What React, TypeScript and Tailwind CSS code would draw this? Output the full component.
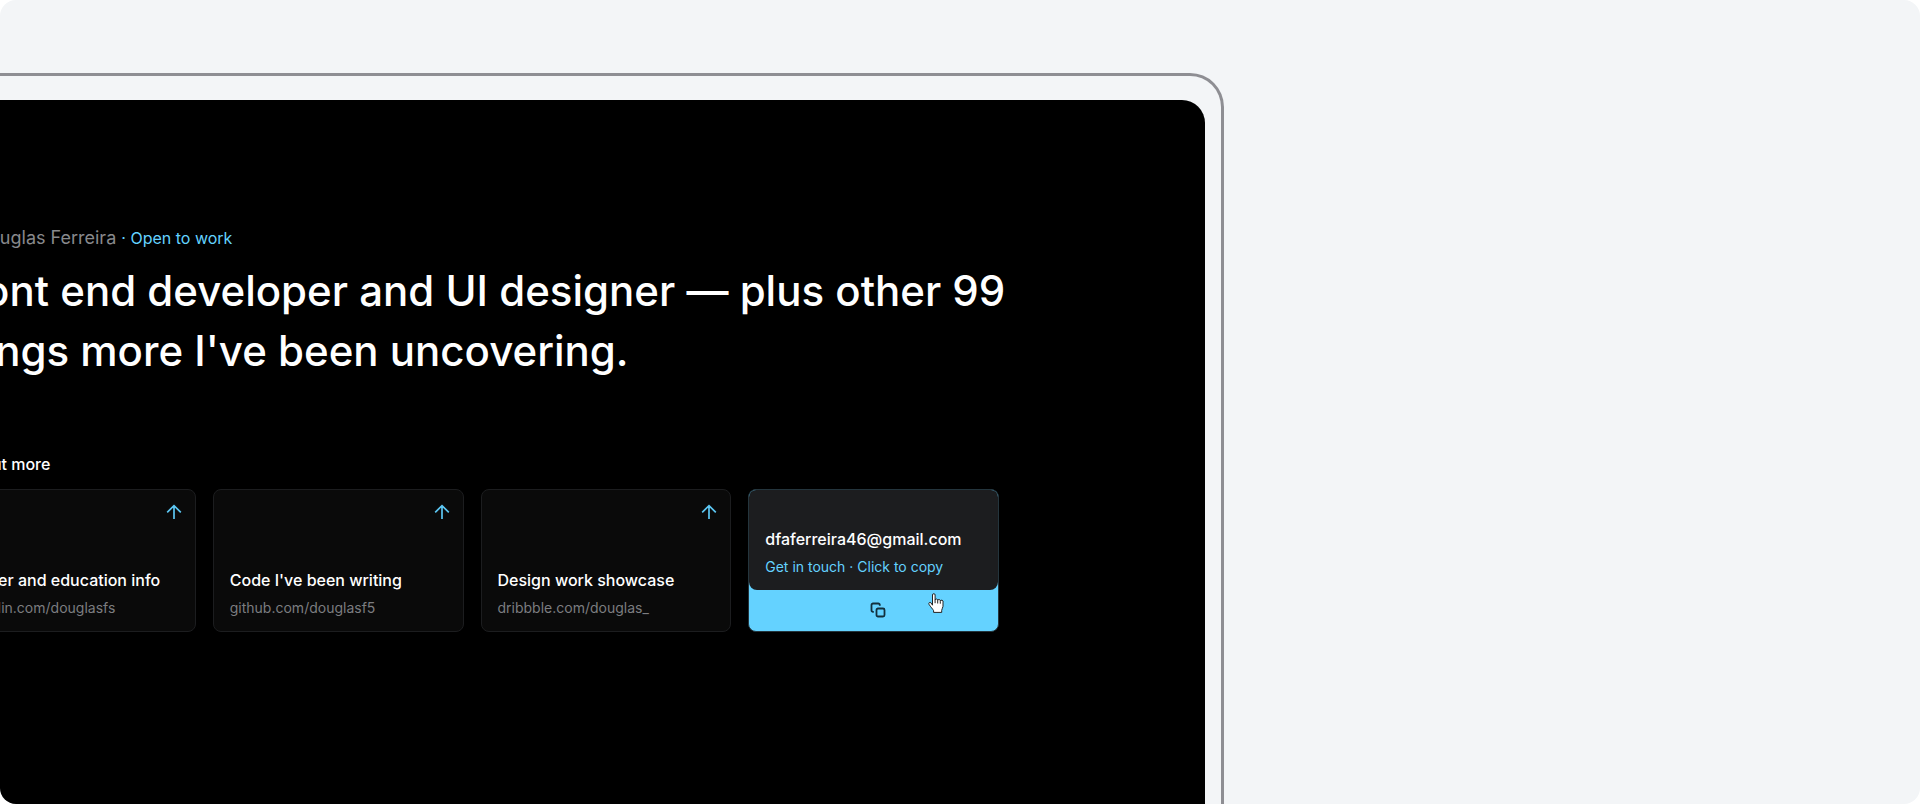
import React from 'react';

const links = [
  { title: 'Career and education info', url: 'linkedin.com/douglasfs' },
  { title: "Code I've been writing", url: 'github.com/douglasf5' },
  { title: 'Design work showcase', url: 'dribbble.com/douglas_' },
];

function ArrowUp() {
  return (
    <svg aria-hidden="true" viewBox="0 0 16 16" className="size-4 self-end text-[#5cc6f2]" fill="none" stroke="currentColor" strokeWidth="1.7">
      <path d="M8 15V2M1.2 8.3 8 1.7l6.8 6.6" />
    </svg>
  );
}

function CopyIcon() {
  return (
    <svg aria-hidden="true" viewBox="0 0 16 16" className="size-4 text-[#12303d]" fill="none" stroke="currentColor" strokeWidth="1.8">
      <rect x="6.5" y="6.5" width="8" height="8" rx="1.5" />
      <path d="M3.8 9.8H3a1.5 1.5 0 0 1-1.5-1.5V3A1.5 1.5 0 0 1 3 1.500h5.300A1.500 1.500 0 0 1 9.800 3v.800" />
    </svg>
  );
}

function HandCursor() {
  return (
    <svg aria-hidden="true" viewBox="0 0 16 20" className="absolute right-[54px] bottom-[18px] h-5 w-4" fill="#fff" stroke="#222" strokeWidth="1" strokeLinejoin="round">
      <path d="M4.5 12.2V2a1.3 1.3 0 0 1 2.6 0v5.2a1.3 1.3 0 0 1 2.6.3 1.3 1.3 0 0 1 2.6.6 1.3 1.3 0 0 1 2.7 1v4.2c0 1.4-1.3 2.6-1.3 4v2.1H5.600v-1.700C4.800 16 2.600 14 1 11.300c-.8-1.600 1-2.500 2-1.400z" />
      <path d="M7.100 7.200v3M9.700 7.500v3M12.300 8.200v2.500" fill="none" />
    </svg>
  );
}

export default function App() {
  return (
    <div className="bg-white font-[Inter,sans-serif]">
      <main className="flex h-screen flex-col overflow-hidden rounded-2xl bg-[#f3f5f7] pt-[73px]">
        <div className="flex w-[63.75%] grow flex-col rounded-tr-[34px] border-t-[3px] border-r-[3px] border-[#8e8e93] pt-6 pr-4">
          <div className="grow rounded-tr-[23px] bg-black pt-[124px]">
            <div className="-ml-[55px] w-[1054px]">
              <p className="text-[18px] leading-7 text-[#88898c]">
                I'm Douglas Ferreira <span className="text-[16px] text-[#64d2ff]">· Open to work</span>
              </p>
              <h1 className="mt-[9px] text-[42px] leading-[60px] font-medium whitespace-nowrap text-white">
                Front end developer and UI designer — plus other 99
                <br />
                things more I've been uncovering.
              </h1>
              <h2 className="mt-[71px] text-[16px] leading-6 font-medium text-white">Find out more</h2>
              <div className="mt-[13px] grid grid-cols-4 gap-[17px]">
                {links.map((l) => (
                  <a key={l.url} href={`https://${l.url}`} className="flex h-[143px] flex-col justify-between rounded-lg border border-[#1c1d1f] bg-[#0a0a0a] pt-3.5 pr-[13px] pb-[13px] pl-4">
                    <ArrowUp />
                    <span className="flex flex-col gap-1.5 whitespace-nowrap">
                      <span className="text-[16px] leading-6 font-medium text-white">{l.title}</span>
                      <span className="text-[14px] leading-5 text-[#7c7d80]">{l.url}</span>
                    </span>
                  </a>
                ))}
                <button type="button" className="relative flex h-[143px] flex-col overflow-hidden rounded-lg border border-[#24353d] bg-[#64d2ff] text-left">
                  <span className="flex h-[100px] w-full flex-col justify-end gap-1.5 rounded-b-lg bg-[#1c1d1f] px-4 pb-[13px]">
                    <span className="text-[16px] leading-6 font-medium text-white">dfaferreira46@gmail.com</span>
                    <span className="text-[14px] leading-5 text-[#64d2ff]">Get in touch · Click to copy</span>
                  </span>
                  <span className="flex w-full grow items-center justify-center pb-0.5 pl-2">
                    <CopyIcon />
                  </span>
                  <HandCursor />
                </button>
              </div>
            </div>
          </div>
        </div>
      </main>
    </div>
  );
}
